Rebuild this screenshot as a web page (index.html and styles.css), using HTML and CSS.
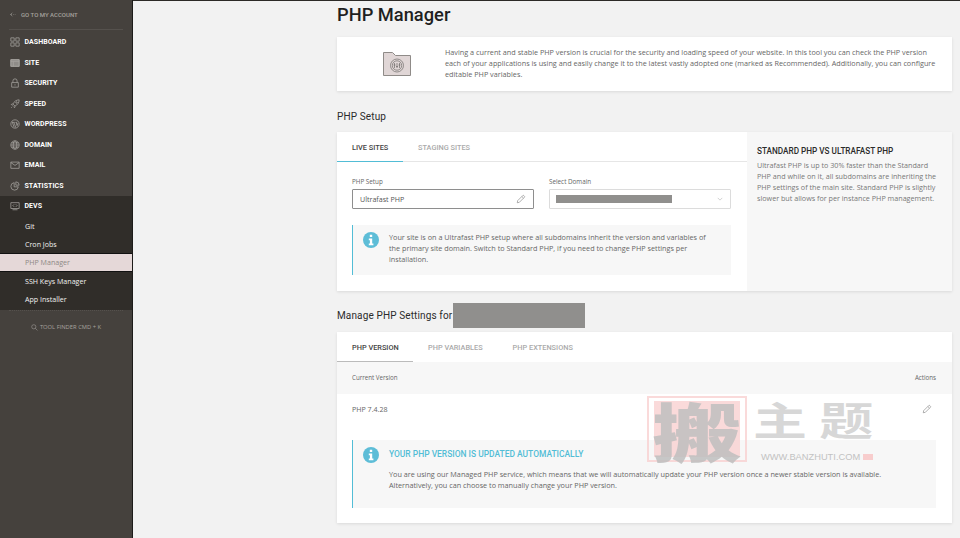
FILE: index.html
```html
<!DOCTYPE html>
<html lang="en">
<head>
<meta charset="utf-8">
<title>PHP Manager</title>
<link rel="stylesheet" href="styles.css">
</head>
<body>
<div class="app">
  <aside class="sidebar">
    <a class="back">
      <svg class="back-ico" viewBox="0 0 10 8"><path d="M4 1 1 4l3 3M1 4h2M5 4h1M8 4h1"/></svg>
      <span>GO TO MY ACCOUNT</span>
    </a>
    <nav class="nav">
      <a class="nav-item"><svg viewBox="0 0 12 12"><path d="M1 1h4v4H1zM7 1h4v4H7zM1 7h4v4H1zM7 7h4v4H7z"/></svg><span>DASHBOARD</span></a>
      <a class="nav-item"><svg viewBox="0 0 12 12"><path class="fill" d="M1 2h10v8H1z"/><path d="M1 2h10v8H1zM1 4h10M4 4v6"/></svg><span>SITE</span></a>
      <a class="nav-item"><svg viewBox="0 0 12 12"><path d="M2 5.500h8V11H2zM3.500 5.500V3.500a2.500 2.500 0 0 1 5 0v2M6 7.500V9"/></svg><span>SECURITY</span></a>
      <a class="nav-item"><svg viewBox="0 0 12 12"><path d="M11 1C7.500 1 5 3 3.500 6L6 8.500C9 7 11 4.500 11 1zM3.500 6 1.500 6.500 3 8M6 8.500 5.500 10.500 4 9M2.500 9.500 1.500 10.500"/><circle cx="7.800" cy="4.200" r=".9"/></svg><span>SPEED</span></a>
      <a class="nav-item"><svg viewBox="0 0 12 12"><circle cx="6" cy="6" r="5"/><path d="M2.800 4 5 10M4.600 4 7 10.300M7.400 4 8.500 8 9.600 4.800M2.200 4h3.500M6.600 4h2"/></svg><span>WORDPRESS</span></a>
      <a class="nav-item"><svg viewBox="0 0 12 12"><circle cx="6" cy="6" r="5"/><ellipse cx="6" cy="6" rx="2.200" ry="5"/><path d="M1 6h10M1.700 3.500h8.600M1.700 8.500h8.600"/></svg><span>DOMAIN</span></a>
      <a class="nav-item"><svg viewBox="0 0 12 12"><path d="M1 2.500h10v7.500H1zM1 3l5 3.500L11 3"/></svg><span>EMAIL</span></a>
      <a class="nav-item"><svg viewBox="0 0 12 12"><path d="M5 2a4.500 4.500 0 1 0 5 5H5zM7 1a4 4 0 0 1 4 4H7z"/></svg><span>STATISTICS</span></a>
      <div class="devs">
        <a class="nav-item"><svg viewBox="0 0 12 12"><path d="M1 2h10v7H1zM3 10.500h6M5 4 3.500 5.500 5 7M7 4l1.500 1.500L7 7"/></svg><span>DEVS</span></a>
        <a class="sub-item">Git</a>
        <a class="sub-item">Cron Jobs</a>
        <a class="sub-item active">PHP Manager</a>
        <a class="sub-item">SSH Keys Manager</a>
        <a class="sub-item">App Installer</a>
      </div>
    </nav>
    <div class="finder">
      <svg class="finder-ico" viewBox="0 0 10 10"><circle cx="4" cy="4" r="3"/><path d="m6.200 6.200 3 3"/></svg>
      <span>TOOL FINDER CMD + K</span>
    </div>
  </aside>

  <main class="main">
    <h1 class="title">PHP Manager</h1>

    <section class="card intro">
      <div class="intro-icon">
        <svg class="folder" viewBox="0 0 28 24">
          <path class="folder-body" d="M.5.500h9l3 3h15v20H.5z"/>
          <circle class="folder-line" cx="14" cy="13.500" r="6.500"/>
          <circle class="folder-line" cx="14" cy="13.500" r="4.700"/>
          <path class="folder-line" d="M11.500 11v5M14 11v5M16.500 11v5M10.500 13h2M13 14.500h2M15.500 13h2"/>
        </svg>
      </div>
      <p class="intro-text">Having a current and stable PHP version is crucial for the security and loading speed of your website. In this tool you can check the PHP version each of your applications is using and easily change it to the latest vastly adopted one (marked as Recommended). Additionally, you can configure editable PHP variables.</p>
    </section>

    <h2 class="section-title setup-title">PHP Setup</h2>

    <section class="card setup">
      <div class="setup-main">
        <div class="tabs">
          <a class="tab tab-live active-blue">LIVE SITES</a>
          <a class="tab tab-staging">STAGING SITES</a>
        </div>
        <div class="fields">
          <div class="field">
            <label class="field-label">PHP Setup</label>
            <div class="input input-dark">
              <span>Ultrafast PHP</span>
              <svg class="pencil" viewBox="0 0 12 12"><path d="M1.500 10.500 2 8l6-6a1 1 0 0 1 1.500 0l.5.500a1 1 0 0 1 0 1.500L4 10zM7 3l2 2"/></svg>
            </div>
          </div>
          <div class="field">
            <label class="field-label">Select Domain</label>
            <div class="input input-light">
              <span class="redact-small"></span>
              <svg class="chev" viewBox="0 0 8 5"><path d="m1 1 3 3 3-3"/></svg>
            </div>
          </div>
        </div>
        <div class="notice notice-setup">
          <svg class="info" viewBox="0 0 16 16"><circle cx="8" cy="8" r="8"/><path class="info-i" d="M6.800 2.800h2.400v2.300H6.800zM5.800 6.500h3.400v5h1.200v1.800H5.800v-1.800h1.100V8.200H5.800z"/></svg>
          <p>Your site is on a Ultrafast PHP setup where all subdomains inherit the version and variables of the primary site domain. Switch to Standard PHP, if you need to change PHP settings per installation.</p>
        </div>
      </div>
      <aside class="setup-side">
        <h3>STANDARD PHP VS ULTRAFAST PHP</h3>
        <p>Ultrafast PHP is up to 30% faster than the Standard PHP and while on it, all subdomains are inheriting the PHP settings of the main site. Standard PHP is slightly slower but allows for per instance PHP management.</p>
      </aside>
    </section>

    <div class="manage-head">
      <h2 class="section-title manage-title">Manage PHP Settings for</h2>
      <span class="redact-big"></span>
    </div>

    <section class="card manage">
      <div class="tabs">
        <a class="tab tab-version active-gray">PHP VERSION</a>
        <a class="tab tab-vars">PHP VARIABLES</a>
        <a class="tab">PHP EXTENSIONS</a>
      </div>
      <div class="table-head">
        <span>Current Version</span>
        <span>Actions</span>
      </div>
      <div class="table-row">
        <span>PHP 7.4.28</span>
        <svg class="pencil" viewBox="0 0 12 12"><path d="M1.500 10.500 2 8l6-6a1 1 0 0 1 1.500 0l.5.500a1 1 0 0 1 0 1.500L4 10zM7 3l2 2"/></svg>
      </div>
      <div class="notice notice-version">
        <svg class="info" viewBox="0 0 16 16"><circle cx="8" cy="8" r="8"/><path class="info-i" d="M6.800 2.800h2.400v2.300H6.800zM5.800 6.500h3.400v5h1.200v1.800H5.800v-1.800h1.100V8.200H5.800z"/></svg>
        <div>
          <h4>YOUR PHP VERSION IS UPDATED AUTOMATICALLY</h4>
          <p>You are using our Managed PHP service, which means that we will automatically update your PHP version once a newer stable version is available. Alternatively, you can choose to manually change your PHP version.</p>
        </div>
      </div>
    </section>
  </main>
</div>

<div class="watermark">
  <div class="seal"><span>搬</span></div>
  <div class="wm-right">
    <div class="wm-title">主 题</div>
    <div class="wm-url">WWW.BANZHUTI.COM <i class="wm-dot"></i></div>
  </div>
</div>
</body>
</html>
```

FILE: styles.css
```css
* { box-sizing: border-box; }
html, body { margin: 0; padding: 0; }
body {
  width: 960px;
  height: 538px;
  overflow: hidden;
  position: relative;
  background: #f2f2f2;
  font-family: "Open Sans", "Liberation Sans", sans-serif;
  color: #5c5c5c;
}
h1, h2, h3, h4, p { margin: 0; font-weight: normal; }

.app { display: flex; height: 538px; border-top: 1px solid #2c2a27; }

/* Sidebar */
.sidebar {
  width: 133px;
  flex: none;
  background: #45413d;
  border-right: 1px solid #1d1c1a;
  margin-top: -1px;
  font-family: Roboto, "Liberation Sans", sans-serif;
}
.back {
  display: flex;
  align-items: center;
  gap: 5px;
  height: 30px;
  margin: 0 9px;
  padding-left: 1px;
  border-bottom: 1px solid #55514d;
  color: #a5a29e;
  font-size: 6px;
  font-weight: 500;
}
.back-ico { width: 6px; height: 5px; fill: none; stroke: #a5a29e; stroke-width: 1; }
.nav { display: flex; flex-direction: column; padding-top: 2px; }
.nav-item {
  display: flex;
  align-items: center;
  gap: 4.500px;
  height: 20.500px;
  padding-left: 10px;
  color: #fff;
  font-size: 7px;
  font-weight: 700;
  letter-spacing: .05px;
}
.nav-item svg {
  width: 10px;
  height: 10px;
  fill: none;
  stroke: #a8a5a1;
  stroke-width: .9;
}
.nav-item svg .fill { fill: #8f8c88; }
.devs { background: #302d29; padding-bottom: 2px; }
.sub-item {
  display: flex;
  align-items: center;
  height: 18px;
  padding-left: 25px;
  color: #f2f1f0;
  font-family: "Open Sans", "Liberation Sans", sans-serif;
  font-size: 7.100px;
}
.sub-item.active {
  height: 19px;
  color: #8d8885;
  background: #e5d8d8;
  border-top: 1px solid #111;
  border-bottom: 1px solid #111;
}
.finder {
  display: flex;
  align-items: center;
  justify-content: center;
  gap: 2px;
  height: 34px;
  margin: 0 9px;
  border-top: 1px dotted #55514d;
  color: #a5a29e;
  font-size: 5.800px;
  font-family: "Open Sans", "Liberation Sans", sans-serif;
}
.finder-ico { width: 7px; height: 7px; fill: none; stroke: #a5a29e; stroke-width: .8; }

/* Main */
.main { flex: 1; padding: 0 8px 0 204px; min-width: 0; }
.title {
  height: 36px;
  padding-top: 3px;
  font-family: Roboto, "Liberation Sans", sans-serif;
  font-size: 18.300px;
  line-height: 21px;
  font-weight: 500;
  color: #1f1f1f;
}
.card { background: #fff; box-shadow: 0 1px 3px rgba(0,0,0,.1); }
.intro { display: flex; height: 54px; align-items: center; }
.intro-icon { width: 108px; flex: none; display: flex; justify-content: center; padding-left: 12px; }
.folder { width: 28px; height: 24px; }
.folder-body { fill: #e0d6d6; stroke: #8f8b88; stroke-width: 1; }
.folder-line { fill: none; stroke: #6f6b68; stroke-width: .7; }
.intro-text {
  flex: 1;
  padding: 0 14px 2px 0;
  font-size: 7.250px;
  line-height: 11px;
  color: #666;
}
.section-title {
  font-family: Roboto, "Liberation Sans", sans-serif;
  font-size: 10px;
  line-height: 14px;
  color: #2b2b2b;
  letter-spacing: .13px;
}
.setup-title { margin: 19px 0 8px; }
.manage-title { padding-top: 2px; }
.setup { display: flex; height: 159px; }
.setup-main { width: 410px; flex: none; }
.tabs {
  display: flex;
  height: 30px;
  border-bottom: 1px solid #e6e6e6;
  font-family: Roboto, "Liberation Sans", sans-serif;
}
.tab {
  display: flex;
  align-items: center;
  height: 30px;
  padding: 1px 15px 0;
  font-size: 7.350px;
  font-weight: 500;
  color: #aaa;
  white-space: nowrap;
}
.tab-staging { padding-left: 15px; }
.tab-vars { padding-right: 15px; }
.active-blue { color: #444; width: 66px; flex: none; border-bottom: 1.500px solid #52bdd6; }
.active-gray { color: #444; width: 76px; flex: none; border-bottom: 1px solid #bbb; }
.fields { display: flex; gap: 15px; padding: 15px 16px 0 15px; }
.field { flex: 1; }
.field-label {
  display: block;
  height: 12px;
  font-size: 6.300px;
  line-height: 9px;
  color: #666;
}
.input {
  display: flex;
  align-items: center;
  justify-content: space-between;
  height: 20px;
  padding: 0 7px;
  background: #fff;
  border-radius: 1px;
  font-size: 7.100px;
  color: #555;
}
.input-dark { border: 1px solid #8e8e8e; }
.input-light { border: 1px solid #dcdcdc; padding-left: 6px; }
.redact-small { width: 116px; height: 8px; background: #908f8d; }
.pencil { width: 10px; height: 10px; fill: none; stroke: #8a8a8a; stroke-width: .8; }
.chev { width: 6px; height: 4px; fill: none; stroke: #b5b5b5; stroke-width: .8; }
.notice {
  display: flex;
  background: #f7f7f7;
  border-left: 1px solid #52bdd6;
  font-size: 7.250px;
  line-height: 11px;
  color: #666;
}
.info { width: 16px; height: 16px; flex: none; fill: #5dbdd7; }
.info-i { fill: #fff; }
.notice-setup {
  gap: 10px;
  height: 50px;
  margin: 16px 16px 0 15px;
  padding: 7px 20px 0 10px;
}
.setup-side {
  flex: 1;
  background: #f7f7f7;
  padding: 14px 14px 0 10px;
}
.setup-side h3 {
  font-family: Roboto, "Liberation Sans", sans-serif;
  font-size: 8.200px;
  line-height: 11px;
  font-weight: 500;
  color: #2b2b2b;
  margin-bottom: 3px;
}
.setup-side p { font-size: 7.200px; line-height: 11px; color: #777; }
.manage-head {
  display: flex;
  align-items: center;
  gap: 1px;
  height: 26px;
  margin: 11px 0 4px;
}
.redact-big { width: 132px; height: 25px; background: #908f8d; }
.manage { height: 191px; }
.tab-version { padding-right: 0; }
.manage .tabs { border-bottom: 0; }
.table-head {
  display: flex;
  justify-content: space-between;
  align-items: center;
  height: 32px;
  padding: 0 16px 1px 15px;
  background: #f7f7f7;
  font-size: 6.200px;
  color: #666;
}
.table-row {
  display: flex;
  justify-content: space-between;
  height: 46px;
  padding: 10px 20px 0 15px;
  font-size: 7.100px;
  line-height: 10px;
  color: #666;
}
.notice-version {
  gap: 10px;
  height: 68px;
  margin: 0 16px 0 15px;
  padding: 7px 45px 0 10px;
}
.notice-version h4 {
  font-family: Roboto, "Liberation Sans", sans-serif;
  font-size: 8.450px;
  line-height: 14px;
  font-weight: 500;
  color: #52bdd6;
  margin-bottom: 7.500px;
}

/* Watermark overlays the page as a stamp */
.watermark {
  position: absolute;
  left: 647px;
  top: 396px;
  display: flex;
  gap: 6px;
  pointer-events: none;
}
.seal {
  width: 100px;
  height: 66px;
  padding: 3px 5px;
  display: flex;
  align-items: center;
  justify-content: center;
  border: 2px solid rgba(248, 205, 205, .75);
  background: rgba(248, 205, 205, .75);
  background-clip: content-box;
}
.seal span {
  font-family: "Noto Sans CJK SC", sans-serif;
  font-size: 64px;
  line-height: 60px;
  font-weight: 900;
  color: rgba(190, 190, 190, .85);
  transform: scaleX(1.4);
}
.wm-right { display: flex; flex-direction: column; padding-top: 6px; }
.wm-title {
  font-family: "Noto Sans CJK SC", sans-serif;
  font-size: 54px;
  line-height: 46px;
  font-weight: 700;
  white-space: nowrap;
  color: rgba(205, 205, 205, .8);
  transform-origin: left top;
  transform: scaleY(.72);
}
.wm-url {
  margin: 3px 0 0 8px;
  font-family: "Liberation Sans", sans-serif;
  font-size: 9.300px;
  line-height: 12px;
  color: #c2c2c2;
  white-space: nowrap;
}
.wm-dot {
  display: inline-block;
  width: 10px;
  height: 6px;
  background: #f8cdcd;
}
```
